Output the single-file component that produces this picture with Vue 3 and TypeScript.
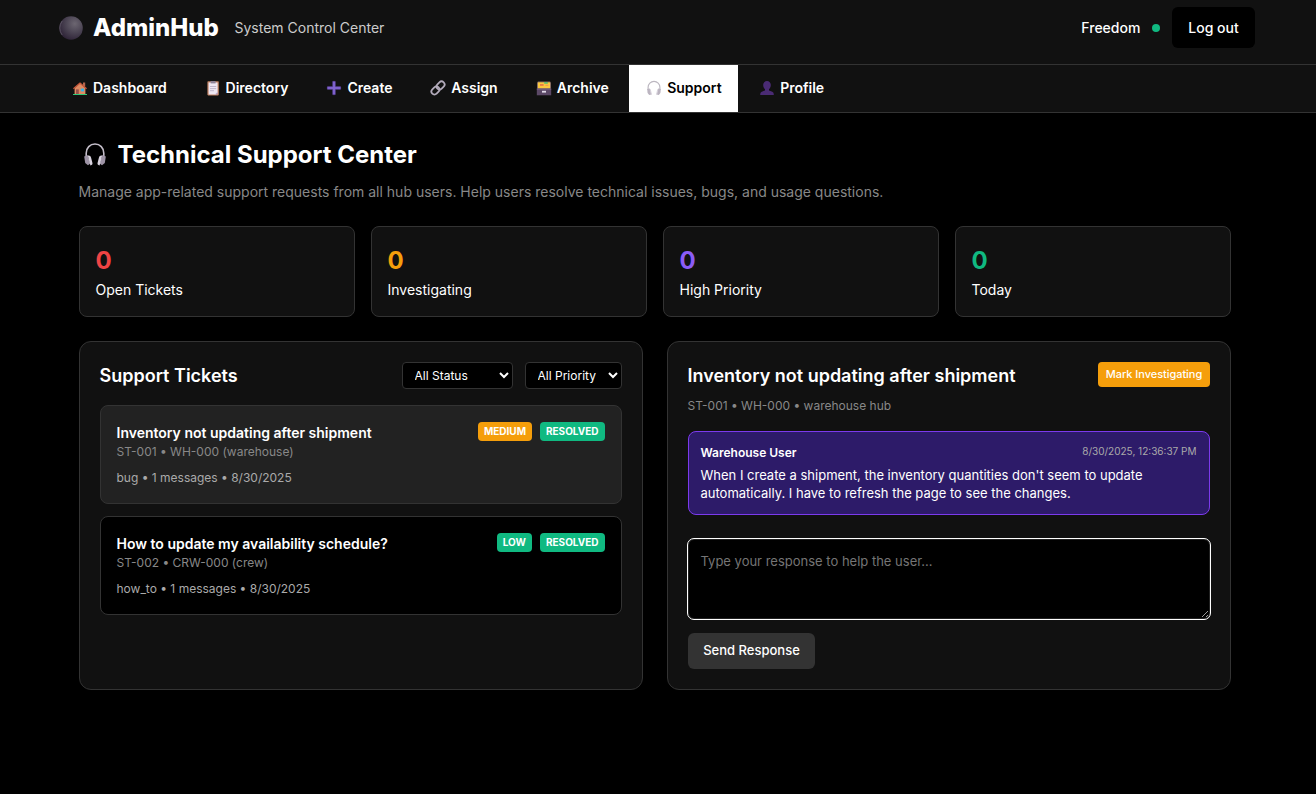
<script setup lang="ts">
import { ref } from 'vue'

interface Tab { name: string; icon: string; width: number }
interface Stat { value: number; label: string; tone: string }
interface Ticket {
  title: string
  meta: string
  info: string
  priority: string
  tone: string
}

const tabs: Tab[] = [
  { name: 'Dashboard', icon: 'house', width: 73.6 },
  { name: 'Directory', icon: 'clipboard', width: 62.8 },
  { name: 'Create', icon: 'plus', width: 44.8 },
  { name: 'Assign', icon: 'link', width: 46.6 },
  { name: 'Archive', icon: 'box', width: 51.4 },
  { name: 'Support', icon: 'headphones', width: 54 },
  { name: 'Profile', icon: 'person', width: 45 },
]
const active = ref('Support')

const stats: Stat[] = [
  { value: 0, label: 'Open Tickets', tone: 'red' },
  { value: 0, label: 'Investigating', tone: 'amber' },
  { value: 0, label: 'High Priority', tone: 'violet' },
  { value: 0, label: 'Today', tone: 'green' },
]

const tickets: Ticket[] = [
  {
    title: 'Inventory not updating after shipment',
    meta: 'ST-001 • WH-000 (warehouse)',
    info: 'bug • 1 messages • 8/30/2025',
    priority: 'MEDIUM',
    tone: 'bg-amber',
  },
  {
    title: 'How to update my availability schedule?',
    meta: 'ST-002 • CRW-000 (crew)',
    info: 'how_to • 1 messages • 8/30/2025',
    priority: 'LOW',
    tone: 'bg-green',
  },
]
const selected = ref(0)
const reply = ref('')
</script>

<template>
  <div class="page">
    <header class="header">
      <div class="wrap header-row">
        <div class="brand">
          <svg class="orb" viewBox="0 0 24 24">
            <defs>
              <radialGradient id="orb" cx="0.66" cy="0.32" r="0.72">
                <stop offset="0" stop-color="#6c6671" />
                <stop offset="0.5" stop-color="#4d4655" />
                <stop offset="1" stop-color="#2f2438" />
              </radialGradient>
            </defs>
            <circle cx="12" cy="12" r="11.8" fill="url(#orb)" />
            <path d="M3.2 19 A11.3 11.3 0 0 1 3.2 5" fill="none" stroke="#77717d" stroke-width="0.8" opacity="0.7" />
          </svg>
          <span class="brand-name">AdminHub</span>
          <span class="brand-sub">System Control Center</span>
        </div>
        <div class="account">
          <span class="user">Freedom</span>
          <span class="dot"></span>
          <button class="logout">Log out</button>
        </div>
      </div>
    </header>

    <nav class="nav">
      <div class="wrap nav-row">
        <button
          v-for="tab in tabs"
          :key="tab.name"
          class="tab"
          :class="{ active: active === tab.name }"
          @click="active = tab.name"
        >
          <svg v-if="tab.icon === 'house'" class="emoji" viewBox="0 0 16 16">
            <path d="M11 2.5h2.2v4H11z" fill="#b5654c" />
            <path d="M2.6 8 8 3.4 13.4 8v6.1H2.6z" fill="#dd8a62" />
            <path d="M1.4 8.8 8 3l6.6 5.8" fill="none" stroke="#c8583c" stroke-width="1.2" stroke-linejoin="round" />
            <path d="M4 9.4h2.8v4.7H4z" fill="#95504a" />
            <path d="M8.8 8.6H12v2.8H8.8z" fill="#35b5e8" />
            <path d="M1 14h14v1H1z" fill="#32c878" />
          </svg>
          <svg v-else-if="tab.icon === 'clipboard'" class="emoji" viewBox="0 0 16 16">
            <rect x="2.4" y="1.2" width="11.4" height="14.2" rx="0.8" fill="#c48465" />
            <path d="M3.6 2.6h9v10l-1.8 1.8H3.6z" fill="#eee7f3" />
            <path d="M12.6 11.8v2.6H10z" fill="#b9a9cf" />
            <path d="M5.6 1h5v2.4h-5z" fill="#8d8297" />
            <path d="M5 6.5h6.2M5 8.6h6.2M5 10.7h4" stroke="#b4a9c2" stroke-width="0.8" />
          </svg>
          <svg v-else-if="tab.icon === 'plus'" class="emoji" viewBox="0 0 16 16">
            <path d="M6.8 1.4h2.4v5.4h5.4v2.4H9.2v5.4H6.8V9.2H1.4V6.8h5.4z" fill="#8265d0" stroke="#6f51bd" stroke-width="0.6" stroke-linejoin="round" />
          </svg>
          <svg v-else-if="tab.icon === 'link'" class="emoji" viewBox="0 0 16 16">
            <g transform="rotate(-45 8 8)" fill="none" stroke="#b3abbb" stroke-width="1.8">
              <rect x="0" y="5" width="8.8" height="6" rx="3" />
              <rect x="7.2" y="5" width="8.8" height="6" rx="3" />
            </g>
          </svg>
          <svg v-else-if="tab.icon === 'box'" class="emoji" viewBox="0 0 16 16">
            <path d="M1 2.4 2 1.4h12l1 1v6.4H1z" fill="#8a6f63" />
            <path d="M2 2.4h12v6.2H2z" fill="#fbc93e" />
            <path d="M8.2 2.2h3.6v1.5H8.2z" fill="#45b979" />
            <path d="M4 4.2h3.6v1.5H4z" fill="#e9694a" />
            <path d="M9.4 4.8h3v1h-3z" fill="#f0925a" />
            <path d="M.8 8.6h14.4v6.7H.8z" fill="#5b4866" />
            <path d="M.8 8.6h14.4v1H.8z" fill="#7d6889" />
            <path d="M6 10.8h4v1.8H6z" fill="#e4dceb" />
          </svg>
          <svg v-else-if="tab.icon === 'headphones'" class="emoji" viewBox="0 0 16 16">
            <path d="M2.1 10V7.3a5.9 5.9 0 0 1 11.8 0V10" fill="none" stroke="#bcb7c0" stroke-width="1.15" />
            <path d="M1.2 9.1 3.8 8.4 5.5 14.4 3.2 15.1 1.6 13.1z" fill="#bbb4c0" />
            <path d="M14.8 9.1 12.2 8.4 10.5 14.4 12.8 15.1 14.4 13.1z" fill="#bbb4c0" />
            <path d="M4.2 9.3 5.4 14.6M11.8 9.3 10.6 14.6" stroke="#d8d3dc" stroke-width="1.1" />
          </svg>
          <svg v-else class="emoji" viewBox="0 0 16 16">
            <path d="M8 1.1a3.8 3.8 0 0 1 3.8 4c0 2-.9 3.5-1.8 4.2v1.3l3.3 1.1c1 .4 1.5 1.5 1.5 3.3H1.2c0-1.8.5-2.9 1.5-3.3L6 10.6V9.3C5.1 8.6 4.2 7.1 4.2 5.1a3.8 3.8 0 0 1 3.8-4z" fill="#4a2b74" />
          </svg>
          <span class="tab-name" :style="{ width: tab.width + 'px' }">{{ tab.name }}</span>
        </button>
      </div>
    </nav>

    <main class="wrap main">
      <h1 class="title">
        <svg class="title-icon" viewBox="0 0 24 24">
          <path d="M3.2 14.5v-3.3C3.2 5.8 7 2 12 2s8.8 3.8 8.8 9.2v3.3" fill="none" stroke="#c3bdc8" stroke-width="1.6" />
          <path d="M1.2 14.4 4.6 13 7.4 21.6 5 23.3 2.2 21z" fill="#9d93a5" />
          <path d="M22.8 14.4 19.4 13 16.6 21.6 19 23.3 21.8 21z" fill="#9d93a5" />
          <path d="M4.8 13.6c1.9-.3 2.8.4 3.3 2.2l1.3 5c.4 1.5-.2 2.4-2 2.6z" fill="#d8d2de" />
          <path d="M19.2 13.6c-1.9-.3-2.8.4-3.3 2.2l-1.3 5c-.4 1.5.2 2.4 2 2.6z" fill="#d8d2de" />
        </svg>
        <span>Technical Support Center</span>
      </h1>
      <p class="subtitle">Manage app-related support requests from all hub users. Help users resolve technical issues, bugs, and usage questions.</p>

      <section class="stats">
        <div v-for="stat in stats" :key="stat.label" class="stat">
          <div class="stat-value" :class="stat.tone">{{ stat.value }}</div>
          <div class="stat-label">{{ stat.label }}</div>
        </div>
      </section>

      <section class="panels">
        <div class="panel">
          <div class="panel-head">
            <h2 class="heading">Support Tickets</h2>
            <div class="filters">
              <select class="filter status"><option>All Status</option></select>
              <select class="filter priority"><option>All Priority</option></select>
            </div>
          </div>
          <div class="tickets">
            <article
              v-for="(ticket, i) in tickets"
              :key="ticket.title"
              class="ticket"
              :class="{ selected: selected === i }"
              @click="selected = i"
            >
              <div class="ticket-top">
                <div>
                  <h3 class="ticket-title">{{ ticket.title }}</h3>
                  <p class="ticket-meta">{{ ticket.meta }}</p>
                </div>
                <div class="badges">
                  <span class="badge" :class="ticket.tone">{{ ticket.priority }}</span>
                  <span class="badge bg-green">RESOLVED</span>
                </div>
              </div>
              <p class="ticket-info">{{ ticket.info }}</p>
            </article>
          </div>
        </div>

        <div class="panel">
          <div class="detail-head">
            <div>
              <h2 class="heading">Inventory not updating after shipment</h2>
              <p class="detail-meta">ST-001 • WH-000 • warehouse hub</p>
            </div>
            <button class="mark">Mark Investigating</button>
          </div>
          <div class="message">
            <div class="message-head">
              <strong class="author">Warehouse User</strong>
              <time class="time">8/30/2025, 12:36:37 PM</time>
            </div>
            <p class="message-text">When I create a shipment, the inventory quantities don't seem to update automatically. I have to refresh the page to see the changes.</p>
          </div>
          <textarea v-model="reply" class="reply" placeholder="Type your response to help the user..."></textarea>
          <button class="send">Send Response</button>
        </div>
      </section>
    </main>
  </div>
</template>

<style>
html,
body {
  background: #000;
}
</style>

<style scoped>
* {
  box-sizing: border-box;
}
.page {
  min-height: 794px;
  background: #000;
  color: #fff;
  font-family: Inter, "Liberation Sans", sans-serif;
}
h1, h2, h3, p {
  margin: 0;
}
button, select, textarea {
  font-family: inherit;
}
.wrap {
  width: 1200px;
  margin-left: 54.5px;
}
.header {
  height: 65px;
  background: #111;
  border-bottom: 1px solid #333;
}
.header-row {
  display: flex;
  justify-content: space-between;
  align-items: center;
  height: 55px;
}
.brand, .account {
  display: flex;
  align-items: center;
}
.orb {
  width: 24px;
  height: 24px;
  margin-left: 4px;
}
.brand-name {
  width: 126px;
  margin-left: 10.5px;
  font-size: 24px;
  font-weight: 800;
  line-height: 36px;
  white-space: nowrap;
}
.brand-sub {
  margin-left: 15.5px;
  font-size: 14px;
  line-height: 22px;
  color: #ccc;
}
.user {
  margin-right: -0.9px;
  font-size: 14px;
  font-weight: 500;
}
.dot {
  width: 8px;
  height: 8px;
  margin: 0 12px;
  border-radius: 50%;
  background: #10b981;
}
.logout {
  width: 83px;
  height: 41px;
  padding: 0 0 0 1px;
  border: 0;
  border-radius: 6px;
  background: #000;
  color: #fff;
  font-size: 14px;
  font-weight: 500;
}
.nav {
  height: 48px;
  background: #111;
  border-bottom: 1px solid #333;
}
.nav-row {
  display: flex;
  gap: 4px;
  padding-left: 0.5px;
}
.tab {
  display: flex;
  align-items: center;
  height: 47px;
  padding: 0 17px 2px;
  border: 0;
  background: transparent;
  color: #fff;
  font-size: 14px;
  font-weight: 600;
}
.tab.active {
  background: #fff;
  color: #000;
}
.emoji {
  width: 16px;
  height: 16px;
  margin-right: 5px;
}
.tab-name {
  text-align: left;
  white-space: nowrap;
}
.main {
  padding: 24px 24px 0;
}
.title {
  display: flex;
  align-items: center;
  height: 34px;
  font-size: 24px;
  font-weight: 700;
}
.title-icon {
  width: 24px;
  height: 24px;
  margin: 0 11px 0 4px;
}
.subtitle {
  margin-top: 10px;
  font-size: 14px;
  line-height: 22px;
  color: #888;
  white-space: nowrap;
}
.stats {
  display: grid;
  grid-template-columns: repeat(4, 1fr);
  gap: 16px;
  margin-top: 23px;
}
.stat {
  height: 91px;
  padding: 16px;
  border: 1px solid #333;
  border-radius: 8px;
  background: #111;
}
.stat-value {
  font-size: 24px;
  font-weight: 700;
  line-height: 36px;
}
.stat-label {
  font-size: 14px;
  line-height: 22px;
}
.red { color: #ef4444; }
.amber { color: #f59e0b; }
.violet { color: #8b5cf6; }
.green { color: #10b981; }
.bg-amber { background: #f59e0b; }
.bg-green { background: #10b981; }
.panels {
  display: grid;
  grid-template-columns: 1fr 1fr;
  gap: 24px;
  margin-top: 24px;
}
.panel {
  height: 349px;
  padding: 20px;
  border: 1px solid #333;
  border-radius: 12px;
  background: #111;
}
.panel-head {
  display: flex;
  justify-content: space-between;
  align-items: center;
  height: 27px;
}
.heading {
  font-size: 18px;
  font-weight: 600;
  line-height: 27px;
  white-space: nowrap;
}
.filters {
  display: flex;
  gap: 12px;
}
.filter {
  height: 27px;
  padding: 0 0 0 8px;
  border: 1px solid #333;
  border-radius: 4px;
  background: #000;
  color: #fff;
  font-size: 12px;
}
.status { width: 111px; }
.priority { width: 97px; }
.tickets {
  display: flex;
  flex-direction: column;
  gap: 12px;
  margin-top: 16px;
}
.ticket {
  height: 99px;
  padding: 16px;
  border: 1px solid #333;
  border-radius: 8px;
  background: #000;
}
.ticket.selected {
  background: #222;
}
.ticket-top {
  display: flex;
  justify-content: space-between;
  align-items: flex-start;
}
.ticket-title {
  font-size: 14px;
  font-weight: 600;
  line-height: 21px;
}
.ticket-meta {
  font-size: 12px;
  line-height: 18px;
  color: #888;
}
.ticket-info {
  margin-top: 8px;
  font-size: 12px;
  line-height: 17px;
  color: #aaa;
}
.badges {
  display: flex;
  gap: 8px;
}
.badge {
  height: 19px;
  padding: 0 6px;
  border-radius: 4px;
  font-size: 10px;
  font-weight: 700;
  line-height: 19px;
}
.detail-head {
  display: flex;
  justify-content: space-between;
  align-items: flex-start;
  height: 69px;
}
.detail-meta {
  margin-top: 8px;
  font-size: 12px;
  line-height: 18px;
  color: #888;
}
.mark {
  width: 112px;
  height: 25px;
  padding: 0 0 1px 1px;
  border: 0;
  border-radius: 4px;
  background: #f59e0b;
  color: #fff;
  font-size: 11px;
  font-weight: 500;
  letter-spacing: -0.05px;
}
.message {
  height: 84px;
  padding: 12px;
  border: 1px solid #7c3aed;
  border-radius: 8px;
  background: #2d1b69;
}
.message-head {
  display: flex;
  justify-content: space-between;
}
.author {
  font-size: 12px;
  font-weight: 600;
  line-height: 18px;
}
.time {
  font-size: 10px;
  line-height: 15px;
  color: #aaa;
}
.message-text {
  margin-top: 4px;
  font-size: 13px;
  line-height: 18px;
}
.reply {
  display: block;
  width: 522px;
  height: 80px;
  margin-top: 24px;
  padding: 12px;
  border: 1px solid #222;
  border-radius: 6px;
  outline: 1px solid #fff;
  background: #000;
  color: #fff;
  font-size: 13px;
  line-height: 18px;
  resize: vertical;
}
.reply::placeholder {
  color: #757575;
}
.send {
  width: 127px;
  height: 36px;
  margin-top: 14px;
  padding: 0 0 2px 1px;
  border: 0;
  border-radius: 6px;
  background: #333;
  color: #fff;
  font-size: 13px;
  font-weight: 500;
}
</style>
